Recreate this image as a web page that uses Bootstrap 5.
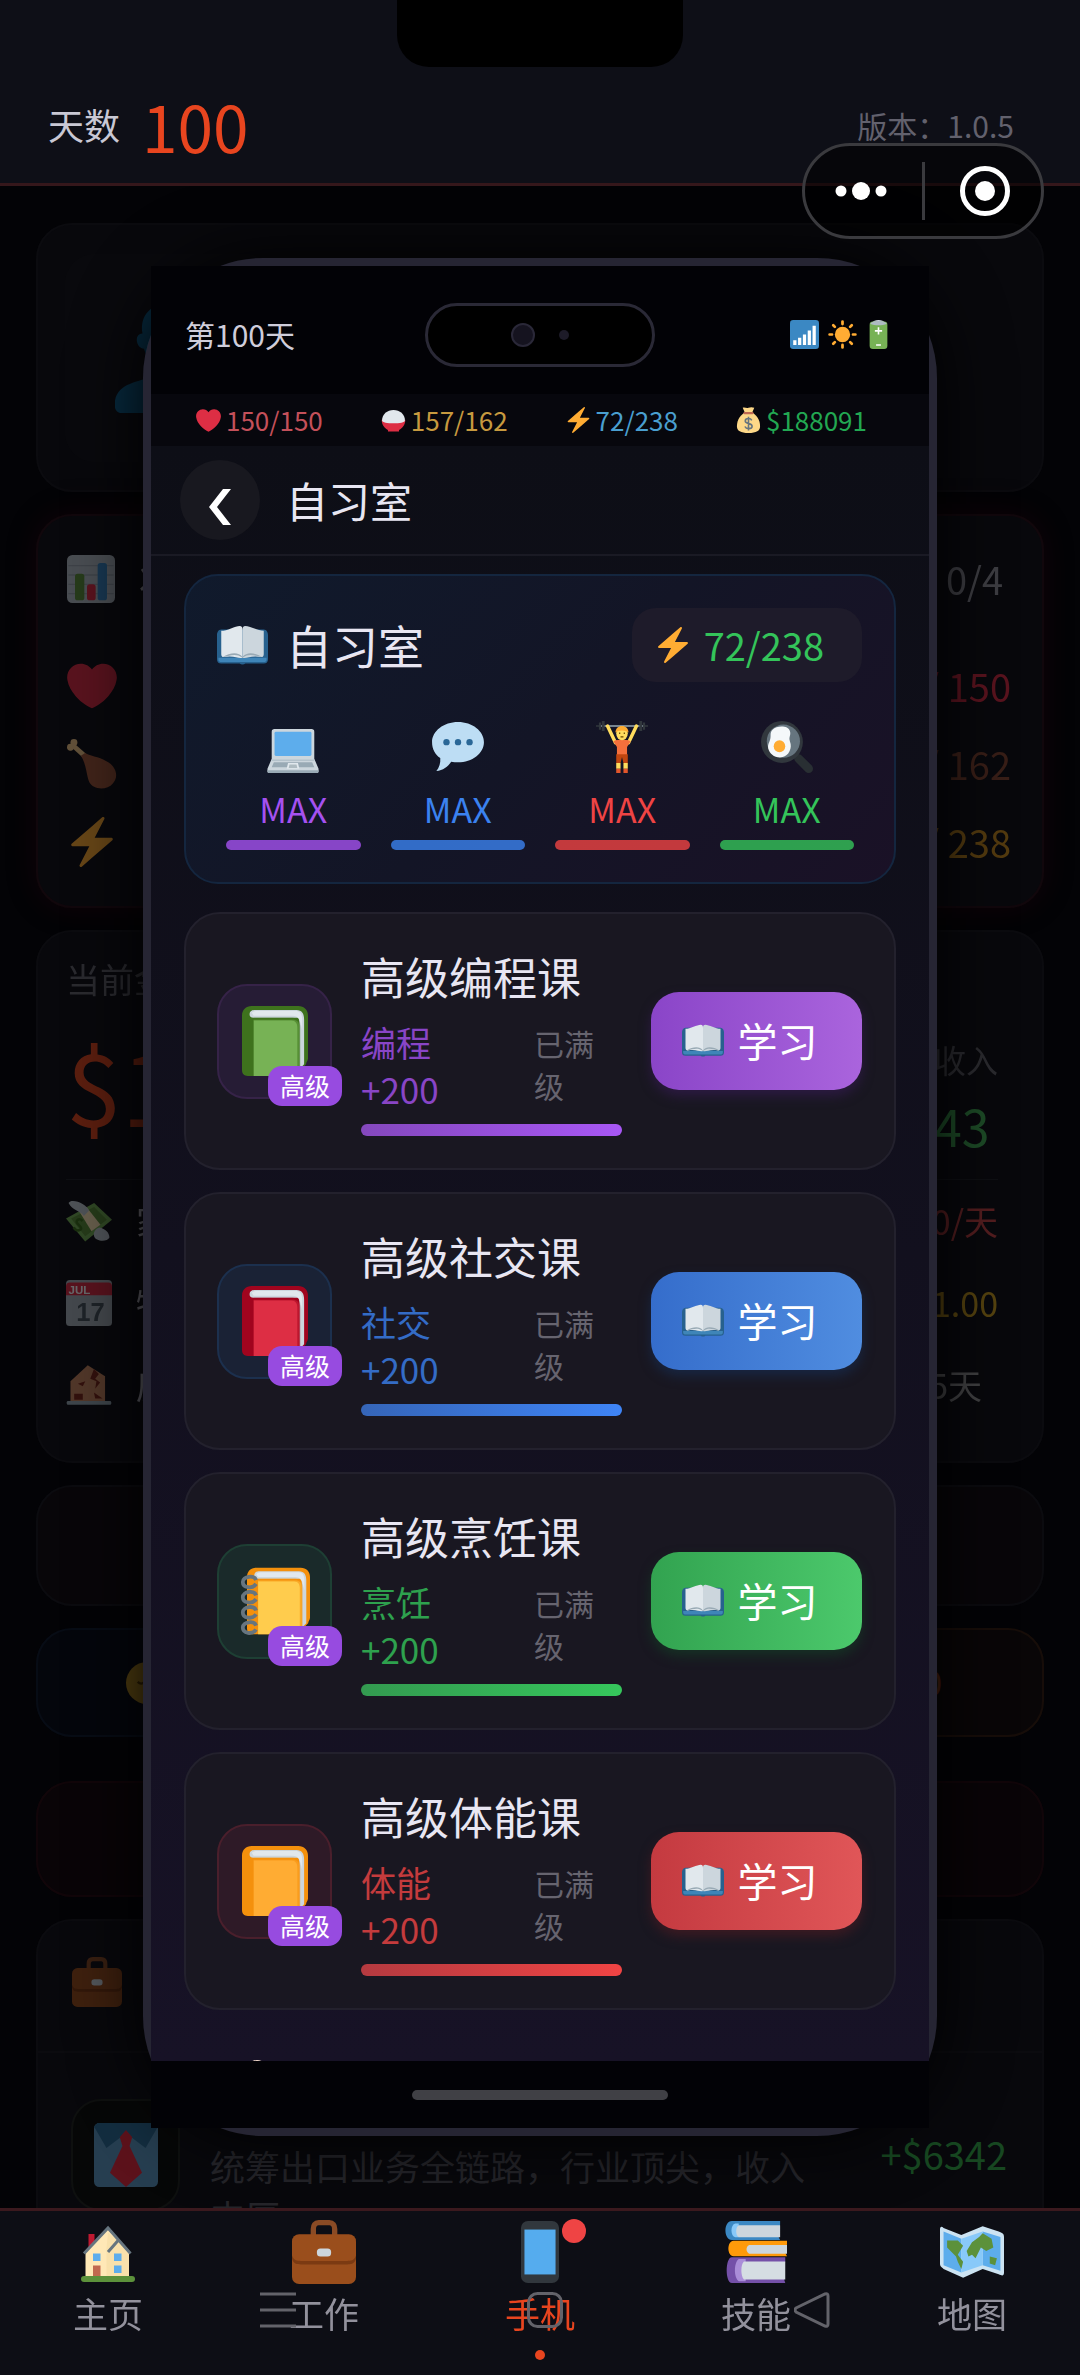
<!DOCTYPE html>
<html lang="zh-CN">
<head>
<meta charset="utf-8">
<meta name="viewport" content="width=device-width, initial-scale=1">
<title>自习室</title>
<link href="https://cdn.jsdelivr.net/npm/bootstrap@5.3.0/dist/css/bootstrap.min.css" rel="stylesheet">
<style>
  :root{--purple:#a551f0;--blue:#3b82f0;--green:#34c45a;--red:#ef4444}
  body{font-family:"Noto Sans CJK SC","Noto Sans",sans-serif;font-weight:400;background:#030306;color:#e8e6f2;height:100vh;min-height:2375px;overflow-x:hidden;line-height:1.2}
  svg{display:block;flex:none}
  .t26{font-size:26px}.t30{font-size:30px}.t34{font-size:34px}.t38{font-size:38px}.t42{font-size:42px}
  .topbar{background:#0e0f17;border-bottom:3px solid #35171b;height:186px;padding:66px 66px 0 48px}
  .day-label{color:#c9c8d4;font-size:36px}
  .day-num{color:#e8451f;font-size:64px;line-height:1}
  .version{color:#62616d}
  .notch{top:0;left:50%;width:286px;height:67px;margin-left:-143px;background:#000;border-radius:0 0 32px 32px}
  .capsule{top:143px;right:36px;width:242px;height:96px;border:3px solid #3a3a3e;border-radius:48px;background:rgba(0,0,0,.55);z-index:5;padding:0 30px}
  .capsule button{background:none;border:0;padding:0}
  .capsule i{width:3px;height:58px;background:#3a3a3e}

  /* dimmed home page behind the phone */
  .home{padding:37px 36px 0;opacity:.4}
  .panel{background:#121217;border:2px solid #19191e;border-radius:36px}
  .avatar{width:210px;height:208px;background:#16161a;border-radius:30px;margin:29px 0 0 27px}
  .stats-box{border-color:#2a0f17;box-shadow:0 0 30px #26050c}
  .line78{height:78px;padding:0 7px 0 5px}.line82{height:82px}
  .muted{color:#67676e}
  .cash{font-size:100px;line-height:160px;color:#e04a20}
  .job-icon{width:109px;height:112px;border:2px solid #22261f;border-radius:30px;background:#0e100c}
  .job-text{font-size:35px;line-height:50px;color:#5a5a62}

  /* phone */
  .phone-layer{inset:0;padding:72px 143px}
  .phone{height:100%;border:8px solid #262533;border-radius:120px;box-shadow:0 0 70px #000}
  .screen{background:linear-gradient(#0d0e16,#171226)}
  .statusbar{height:128px;background:#020206;padding:8px 38px 0 34px}
  .island{width:230px;height:64px;border:3px solid #2a2936;border-radius:32px;background:#000;left:274px;top:37px}
  .cam{width:24px;height:24px;border-radius:50%;background:#15131f;border:2px solid #2a2838}
  .cam-sm{width:10px;height:10px;border-radius:50%;background:#1d1b28}
  .vitals{height:52px;background:#07070d;padding:0 62px 0 44px}
  .titlebar{height:110px;border-bottom:2px solid #1a1a24;padding:0 29px}
  .back{width:80px;height:80px;border-radius:50%;background:#18181f;border:0}
  .content-area{padding:18px 33px 0}
  .hero{border:2px solid #14263f;border-radius:34px;background:linear-gradient(135deg,#101a2c,#131526 50%,#1a1126);padding:32px 32px 32px 31px;height:310px}
  .pill{background:#1e1b2a;border-radius:24px;height:74px;padding:0 38px 0 22px}
  .hero-skills{gap:30px;padding:0 8px 0 9px}
  .hero-skills div{min-width:0}
  .meter{height:10px;border-radius:5px;opacity:.8}
  .course{height:258px;border:2px solid #23212d;border-radius:36px;background:#191721;padding:0 32px 0 31px;gap:29px}
  .course-icon{width:115px;height:115px;border-radius:30px;border:2px solid}
  .lvl{right:-12px;bottom:-9px;width:74px;height:40px;border-radius:14px;background:#974be0;font-size:25px;line-height:38px;color:#fff}
  .course h3{font-size:44px;line-height:60px;font-weight:400;margin:0 0 12px}
  .gain{width:120px;font-size:35px;line-height:47px;opacity:.8}
  .full{width:88px;font-size:30px;line-height:42px;color:#66646f;padding-top:4px}
  .bar{height:12px;border-radius:6px;margin-top:12px}
  .study{width:211px;height:98px;border-radius:28px;border:0;color:#fff;font-size:40px;gap:14px;padding:0 14px 2px 0}
  .homebar{height:67px;background:#020206}
  .homebar span{width:256px;height:10px;border-radius:5px;background:#404045}

  .c-p{color:var(--purple)}.c-b{color:var(--blue)}.c-r{color:var(--red)}.c-g{color:var(--green)}
  .b-p{background:var(--purple)}.b-b{background:var(--blue)}.b-r{background:var(--red)}.b-g{background:var(--green)}
  .g-p{background:linear-gradient(90deg,#8448bd,#a857f5)}.g-b{background:linear-gradient(90deg,#3565b8,#3f85f7)}
  .g-g{background:linear-gradient(90deg,#339a50,#36c75c)}.g-r{background:linear-gradient(90deg,#b53a40,#f04444)}
  .s-p{background:linear-gradient(90deg,#8a45c8,#aa64dd);box-shadow:0 6px 12px #2c1a42}.s-b{background:linear-gradient(90deg,#356dcb,#508de0);box-shadow:0 6px 12px #182642}
  .s-g{background:linear-gradient(90deg,#32a350,#4cc96c);box-shadow:0 6px 12px #163024}.s-r{background:linear-gradient(90deg,#c43a40,#e05658);box-shadow:0 6px 12px #3c1a22}
  .i-p{background:#261c35;border-color:#362348!important}.i-b{background:#1a2235;border-color:#1c304e!important}
  .i-g{background:#1a2a2a;border-color:#1e3f34!important}.i-r{background:#2e1a27;border-color:#4a1f2c!important}

  .tabs{height:167px;border-top:3px solid #3b191e;background:#0d0e15;z-index:3}
  .tabs a{flex:1 1 0;color:#92919c;text-decoration:none;padding-top:9px}
  .tabs a span{font-size:35px;line-height:48px;margin-top:5px}
  .tabs a.on{color:#e8451f}
  .tabs a.on::after{content:"";width:10px;height:10px;border-radius:50%;background:#e8451f;margin-top:13px}
  .dot{width:24px;height:24px;border-radius:50%;background:#ef4444;top:8px;left:50%;margin-left:22px}
  .sys{left:10px;right:0;top:81px;gap:231px;pointer-events:none}
</style>
<script src="https://cdn.jsdelivr.net/npm/bootstrap@5.3.0/dist/js/bootstrap.bundle.min.js"></script>
</head>
<body class="d-flex flex-column position-relative">

<svg width="0" height="0" class="position-absolute" aria-hidden="true">
  <symbol id="heart" viewBox="0 0 36 36"><path fill="#DD2E44" d="M35.885 11.833c0-5.45-4.418-9.868-9.867-9.868-3.308 0-6.227 1.633-8.018 4.129-1.791-2.496-4.71-4.129-8.017-4.129-5.45 0-9.868 4.417-9.868 9.868 0 .772.098 1.52.266 2.241C1.751 22.587 11.216 31.568 18 34.034c6.783-2.466 16.249-11.447 17.617-19.959.17-.721.268-1.469.268-2.242z"/></symbol>
  <symbol id="bolt" viewBox="0 0 36 36"><path fill="#FFAC33" d="M32.938 15.651C32.792 15.26 32.418 15 32 15H19.925L26.89 1.458c.219-.426.106-.947-.271-1.243C26.437.071 26.218 0 26 0c-.233 0-.466.082-.653.243L18 6.588 3.347 19.243c-.316.273-.43.714-.284 1.105S3.582 21 4 21h12.075L9.11 34.542c-.219.426-.106.947.271 1.243.182.144.401.215.619.215.233 0 .466-.082.653-.243L18 29.412l14.653-12.655c.317-.273.43-.714.285-1.106z"/></symbol>
  <symbol id="rice" viewBox="0 0 36 36"><path fill="#DD2E44" d="M1 17h34c0 7-4 12.500-9 14.500V34H10v-2.500C5 29.500 1 24 1 17z"/><path fill="#E1E8ED" d="M1.500 18C1.500 9 9 3 18 3s16.500 6 16.500 15c0 3-8 4-16.500 4S1.500 21 1.500 18z"/></symbol>
  <symbol id="bag" viewBox="0 0 36 36"><path fill="#FDD888" d="M12 8C4 14 2 21 2 27c0 6 5 9 16 9s16-3 16-9c0-6-2-13-10-19z"/><path fill="#FDD888" d="M10 1c3-1 5 1 8 0s5-1 8 0l-3 7H13z"/><rect x="11" y="7" width="14" height="3" rx="1.500" fill="#BF6952"/><path d="M22.500 18.500c-1-2-2.500-2.500-4.500-2.500-2.500 0-4.500 1-4.500 3.500 0 5 9.500 2 9.500 7 0 2.500-2.500 3.500-5 3.500s-4-1-5-3M18 13.500v19" fill="none" stroke="#67757F" stroke-width="2.200"/></symbol>
  <symbol id="signal" viewBox="0 0 36 36"><rect width="36" height="36" rx="4" fill="#3B88C3"/><path fill="#fff" d="M4 25h4v6H4zM10 22h4v9h-4zM16 18h4v13h-4zM22 13h4v18h-4zM28 7h4v24h-4z"/></symbol>
  <symbol id="sun" viewBox="0 0 36 36"><circle cx="18" cy="18" r="9.500" fill="#FFAC33"/><path stroke="#FFAC33" stroke-width="3.400" stroke-linecap="round" d="M18 2v3M18 31v3M2 18h3M31 18h3M6.500 6.500l2 2M27.500 27.500l2 2M6.500 29.500l2-2M27.500 8.500l2-2"/></symbol>
  <symbol id="battery" viewBox="0 0 24 36"><ellipse cx="12" cy="3" rx="7" ry="3" fill="#CCD6DD"/><rect x="1" y="2" width="22" height="34" rx="4" fill="#77B255"/><path d="M2 5c0-5 20-5 20 0-5 2-15 2-20 0z" fill="#AEBBC1"/><path stroke="#fff" stroke-width="2" d="M12 9v9M7.500 13.500h9M9 31h6"/></symbol>
  <symbol id="openbook" viewBox="0 0 36 28"><path fill="#27618E" d="M0 7c0-2 1-4 3-4h30c2 0 3 2 3 4v17c0 2-1 3-3 3H20c-1 1-3 1-4 0H3c-2 0-3-1-3-3z"/><path fill="#3F85B8" d="M1 23h34v1.500c0 1-1 1.500-2 1.500H3c-1 0-2-.5-2-1.500z"/><path fill="#E1E8ED" d="M3 4C7 4 13 .5 16 .5c1.500 0 2 1 2 2.500v20c-3 1-6-2-13-.500-1 .2-2-.5-2-2z"/><path fill="#CCD6DD" d="M33 4C29 4 23 .5 20 .5c-1.500 0-2 1-2 2.500v20c3 1 6-2 13-.500 1 .2 2-.5 2-2z"/><path fill="#99AAB5" d="M4 22.500c6-1 9-3 14 0.500 5-3.500 8-1.500 14-.500-5-3-11-4-14 0-3-4-9-3-14 0z"/></symbol>
  <symbol id="laptop" viewBox="0 0 36 31"><path fill="#CCD6DD" d="M5 0h26a2 2 0 0 1 2 2v19l3 7v2a1 1 0 0 1-1 1H1a1 1 0 0 1-1-1v-2l3-7V2a2 2 0 0 1 2-2z"/><rect x="5" y="2" width="26" height="17" rx="1" fill="#5DADEC"/><path fill="#B4C2CB" d="M3 21.500h30v1H3z"/><path fill="#99AAB5" d="M4.500 23.500h27l1.500 3.500H3zM0 29h36v1a1 1 0 0 1-1 1H1a1 1 0 0 1-1-1z"/><path fill="#E1E8ED" d="M14.500 24h7l1 4h-9z"/><path fill="#AEBBC1" d="M15.500 25h5l.5 2.500h-6z"/></symbol>
  <symbol id="bubble" viewBox="0 0 36 34"><path fill="#BDDDF4" d="M18 0c9.900 0 18 6.300 18 14s-8.100 14-18 14c-1.600 0-3.200-.2-4.700-.5C11 31 7.500 33.500 3 34c2-2.500 3-5.500 2.700-9C2 22.500 0 18.500 0 14 0 6.300 8.100 0 18 0z"/><circle cx="10" cy="14" r="2.200" fill="#2A6797"/><circle cx="18" cy="14" r="2.200" fill="#2A6797"/><circle cx="26" cy="14" r="2.200" fill="#2A6797"/></symbol>
  <symbol id="lifter" viewBox="0 0 36 36"><path stroke="#99AAB5" d="M3 3.500h30"/><path fill="#31373D" d="M4 0h2v7H4zM2 1h1.500v5H2zM0 3h2v1H0zM30 0h2v7h-2zM32.500 1H34v5h-1.500zM34 3h2v1h-2z"/><path d="M8 3.500l5.500 11.500M28 3.500L22.500 15" stroke="#FFDC5D" stroke-width="2.400" stroke-linecap="round"/><path fill="#F4703C" d="M12 14c2-1 4-1 6-1s4 0 6 1l-2.500 4v6h-7v-6z"/><path fill="#C1460F" d="M14 23h8v6h-3l-1-4-1 4h-3z"/><path fill="#FFDC5D" d="M14 29h3v4h-3zM19 29h3v4h-3z"/><path fill="#E2562B" d="M14 33h3v3h-3zM19 33h3v3h-3z"/><ellipse cx="18" cy="8.500" rx="4" ry="4.800" fill="#FFDC5D"/><path fill="#FFAC33" d="M13.500 8c0-6 9-6 9 0-2-2-7-2-9 0z"/><path stroke="#664500" d="M16 8.500h.8M19.200 8.500h.8M17 11h2"/></symbol>
  <symbol id="pan" viewBox="0 0 36 36"><path stroke="#292F33" stroke-width="6" stroke-linecap="round" d="M26 26l7 7"/><circle cx="14.500" cy="14.500" r="14.500" fill="#31373D"/><circle cx="15.500" cy="14" r="11.500" fill="#66757F"/><path fill="#F5F8FA" d="M8 6c3-3 11-3 12 1 1 3-1 4 0 7 2 5-1 10-5 11-5 1-9-2-10-6-.500-3 1-4 1.500-7C7 10 6 8 8 6z"/><ellipse cx="12.800" cy="17.500" rx="4" ry="4.200" fill="#FFAC33"/></symbol>
  <symbol id="book" viewBox="0 0 34 36"><path d="M0 5C0 2 2 0 5 0h24c3 0 5 2 5 5v22c0 1-1 2-1 3l-3 3c-1 2-2 3-4 3H3c-2 0-3-1-3-3z" fill="var(--dk)"/><path fill="#CCD6DD" d="M4 3.500C4.500 2 6 2 7 2h21c3 0 4 2 4 5v23l-2.500 2.500V6H6C4 6 3.700 5 4 3.500z"/><path fill="#E1E8ED" d="M5 3.500C6 2.500 7 2.500 8 2.500h20c2 0 3 2 3 4v6C30 7 29 5 26 5H6z"/><path fill="var(--lt)" d="M6 7h20c2.500 0 3.500 1 3.500 4v22c0 2-1 3-3 3H6z"/><path fill="var(--dk)" opacity=".55" d="M6 6h20c3 0 4 2 4 5v22l-1.500 2V11c0-2-1-3.500-3-3.500H6z"/></symbol>
  <symbol id="rings" viewBox="0 0 10 36"><g fill="none" stroke="#67757F" stroke-width="2"><path d="M9 7c-1-3-7-2-7 1s5 4 7 1M9 15c-1-3-7-2-7 1s5 4 7 1M9 23c-1-3-7-2-7 1s5 4 7 1M9 31c-1-3-7-2-7 1s5 4 7 1"/></g></symbol>
  <symbol id="case" viewBox="0 0 36 36"><path fill="none" stroke="#8A4B25" stroke-width="3" d="M12 10V5c0-2 1-3.500 3-3.500h6c2 0 3 1.500 3 3.500v5"/><rect y="8" width="36" height="28" rx="4" fill="#9A4E1C"/><path fill="#7B3A12" d="M0 20c1 3 3 3 5 3h26c2 0 4 0 5-3v2c-1 3-3 3-5 3H5c-2 0-4 0-5-3z"/><rect x="14" y="16" width="8" height="4.500" rx="2" fill="#CCD6DD"/></symbol>
  <symbol id="chart" viewBox="0 0 36 36"><rect width="36" height="36" rx="4" fill="#B4BEC5"/><path stroke="#98A4AC" d="M1 8h34M1 15h34M1 22h34M1 29h34"/><rect x="6" y="14" width="7" height="20" rx="2" fill="#5C913B"/><rect x="15" y="22" width="6.500" height="12" rx="2" fill="#DD2E44"/><rect x="23" y="6" width="7" height="28" rx="2" fill="#3B88C3"/></symbol>
  <symbol id="leg" viewBox="0 0 36 36"><circle cx="5" cy="2.500" r="2.500" fill="#F1C688"/><circle cx="2.500" cy="6" r="2.500" fill="#F1C688"/><path stroke="#F1C688" stroke-width="3.500" d="M3.500 4l9 8"/><path fill="#A0583A" d="M10 12l3-2c6 3 12 3 17 7 6 4 7 11 3 15-4 5-14 5-17-1-2-5-2-13-6-19z"/></symbol>
  <symbol id="person" viewBox="0 0 36 36"><path fill="#106A9A" d="M36 32v2c0 1-1 2-2 2H2c-1 0-2-1-2-2v-2c1-6 8-6 12-8 2-1 2-3 0-5-1-1-2-2-2.500-4C7 15 6 10 9 10 8 4 12 0 18 0s10 4 9 10c3 0 2 5-.500 5-.500 2-1.500 3-2.500 4-2 2-2 4 0 5 4 2 11 2 12 8z"/></symbol>
  <symbol id="money" viewBox="0 0 36 34"><path fill="#77B255" d="M0 15L22 3l14 13-21 17z"/><path fill="#5C913B" d="M4 15L22 6l10 10-17 13z"/><path fill="#FFE8B6" d="M10 9l6-3 11 14-7 5z"/><path d="M13 17c-3-3-6 0-4 2s4 4 2 5-4 0-5-2" fill="none" stroke="#3E721D" stroke-width="2"/><path fill="#C1CBD2" d="M2 3c2-4 14 0 16 6l-4 4C11 9 5 9 2 3zM34 30c-2 4-11 3-12-1-1-3 1-6 4-7 5 1 8 4 8 8z"/></symbol>
  <symbol id="house" viewBox="0 0 36 38"><path fill="#BE1931" d="M5 6h4v10H5z"/><path fill="#FFE8B6" d="M3 17L18 3l14 14v17H3z"/><path fill="#F4D9A0" d="M17 16l1-11 14 12v17H17z" opacity=".5"/><path fill="none" stroke="#66757F" stroke-width="2" d="M2 19L18 2l15 17M18 18l7-8"/><path fill="#5DADEC" d="M8 19h5v5H8zM22 19h5v5h-5zM22 27h5v5h-5z"/><path fill="#C1694F" d="M8 27h5v8H8z"/><rect y="34" width="36" height="4" rx="2" fill="#5C913B"/></symbol>
  <symbol id="mobile" viewBox="0 0 22 36"><rect width="22" height="36" rx="4" fill="#31373D"/><rect x="2" y="5" width="18" height="26" fill="#55ACEE"/></symbol>
  <symbol id="books" viewBox="0 0 36 36"><path fill="#3B88C3" d="M4 0h28v2l-1 7 1 2H4C-1 11-1 0 4 0z"/><path fill="#88C9F9" d="M6 1.500C3 2 3 9 6 9.500h2v-8z"/><path fill="#CCD6DD" d="M8 2.500h24v7H8c-2-1-2-6 0-7z"/><path fill="#FF9A0A" d="M5 11.500h31v2l-1 5 1 2H5c-4 0-4-9 0-9z"/><path fill="#CCD6DD" d="M14 14h22v5H14c-2-1-2-4 0-5z"/><path fill="#7450A8" d="M4 21h31v2l-1 10 1 3H4c-4 0-4-15 0-15z"/><path fill="#AA8DD8" d="M8 22h4v13H8c-3-2-3-11 0-13z"/><path fill="#D5DDE3" d="M11 23.500h24v10.500H11c-2-2-2-9 0-10.500z"/></symbol>
  <symbol id="map" viewBox="0 0 36 29"><path fill="#CCE3F2" d="M0 2c0-2 1-2 2-1l10 4 12-5 9 3c2 1 3 1 3 3v20c0 2-1 2-3 1l-9-3-11 5-11-5c-1-1-2-1-2-3z"/><path fill="#5DADEC" d="M2 3l10 4v19L2 22zM24 3l10 3v19l-10-3z"/><path fill="#88C9F9" d="M12 7l12-4v19l-12 4z"/><path fill="#5C913B" d="M4 8l6 0 3 3-3 5 3 4-1 4-2-4-1-3-5-5zM18 9l4-3 2-2 5 3 1 5-4 2-3-2-3 6-2-2-2 1-1-3zM28 17l4 1-1 4-3-1z"/></symbol>
  <symbol id="shirt" viewBox="0 0 36 36"><rect width="36" height="36" rx="3" fill="#5C98C0"/><path fill="#2F6F96" d="M0 2l2-2h32l2 2-7 12-8-6h-6l-8 6z"/><path fill="#E32B3E" d="M14.500 8L18 4l3.500 4-1.500 5 7 15-9 8-9-8 7-15z"/></symbol>
  <symbol id="oldhouse" viewBox="0 0 36 34"><path fill="#C98760" d="M3 14L17 1l14 9v21H3z"/><path fill="#7B2A1B" d="M22 4l4 4-3 4 4 3-4 5 1-6-5-2zM6 24h7v5H6zM22 23l7 5h-6zM9 16l6-2-2 4z"/><rect y="30" width="36" height="3" rx="1" fill="#99AAB5"/></symbol>
  <symbol id="face" viewBox="0 0 36 36"><circle cx="18" cy="18" r="18" fill="#D0A024"/><path stroke="#664500" stroke-width="2" fill="none" d="M10 17c2 2 4 2 6 0M21 17c2 2 4 2 6 0"/><ellipse cx="18" cy="26" rx="3" ry="4" fill="#664500"/></symbol>
</svg>

<header class="topbar d-flex align-items-center justify-content-between flex-shrink-0">
  <div class="d-flex align-items-center" style="gap:22px"><span class="day-label">天数</span><span class="day-num">100</span></div>
  <span class="version t30">版本：1.0.5</span>
</header>
<div class="notch position-absolute"></div>
<div class="capsule position-absolute d-flex align-items-center justify-content-between">
  <button type="button" aria-label="更多"><svg width="52" height="20" viewBox="0 0 52 20" fill="#fff"><circle cx="6" cy="10" r="5.500"/><circle cx="26" cy="10" r="9"/><circle cx="46" cy="10" r="5.500"/></svg></button>
  <i></i>
  <button type="button" aria-label="关闭"><svg width="52" height="52" viewBox="0 0 52 52"><circle cx="26" cy="26" r="22.500" fill="none" stroke="#fff" stroke-width="5"/><circle cx="26" cy="26" r="10" fill="#fff"/></svg></button>
</div>

<main class="flex-fill position-relative overflow-hidden" style="min-height:0">
  <div class="home position-absolute top-0 start-0 w-100 d-flex flex-column" aria-hidden="true" style="gap:22px">
    <section class="panel" style="height:269px"><div class="avatar d-flex align-items-center justify-content-center"><svg width="114" height="110" preserveAspectRatio="none"><use href="#person"/></svg></div></section>
    <section class="panel stats-box d-flex flex-column px-4 t38" style="height:394px;padding-top:24px">
      <div class="line78 d-flex align-items-center" style="margin-bottom:29px"><svg width="48" height="48"><use href="#chart"/></svg><span class="ms-4">状态</span><span class="ms-auto me-2" style="color:#96969f">0/4</span></div>
      <div class="line78 d-flex align-items-center justify-content-between"><svg width="50" height="50"><use href="#heart"/></svg><span style="color:#dd2e44">150 / 150</span></div>
      <div class="line78 d-flex align-items-center justify-content-between"><svg width="50" height="50"><use href="#leg"/></svg><span style="color:#8b4a32">157 / 162</span></div>
      <div class="line78 d-flex align-items-center justify-content-between"><svg width="50" height="50"><use href="#bolt"/></svg><span style="color:#cc9020">72 / 238</span></div>
    </section>
    <section class="panel t34" style="height:533px;padding:22px 44px 0 28px">
      <div class="d-flex justify-content-between border-bottom border-dark" style="height:226px">
        <div><div class="muted" style="line-height:50px">当前金额</div><div class="cash">$188091</div></div>
        <div class="text-center" style="padding-top:80px"><div class="muted" style="font-size:32px;line-height:50px">每日收入</div><div style="font-size:50px;line-height:82px;color:#46b95a">+$43</div></div>
      </div>
      <div class="line82 d-flex align-items-center"><svg width="46" height="44"><use href="#money"/></svg><span class="ms-4">家庭支出</span><span class="ms-auto" style="color:#d04848">-$120/天</span></div>
      <div class="line82 d-flex align-items-center"><svg width="46" height="46" viewBox="0 0 36 36"><rect width="36" height="36" rx="3" fill="#A8B2B8"/><path d="M0 12V5c0-2 1-3 3-3h30c2 0 3 1 3 3v7z" fill="#DD2E44"/><text x="2" y="11" font-size="9" font-weight="700" fill="#fff" font-family="Liberation Sans">JUL</text><text x="8" y="32" font-size="20" fill="#4A565E" font-weight="700" font-family="Liberation Sans">17</text></svg><span class="ms-4">物价指数</span><span class="ms-auto" style="color:#d4a520">1.00</span></div>
      <div class="line82 d-flex align-items-center"><svg width="46" height="42"><use href="#oldhouse"/></svg><span class="ms-4">房租剩余</span><span class="ms-auto me-3" style="color:#a0a0a0">5天</span></div>
    </section>
    <section class="panel" style="height:121px;background:#130d0f"></section>
    <div class="d-flex" style="gap:22px;height:109px">
      <section class="panel flex-fill d-flex align-items-center" style="background:#090d17;border-color:#101c2e;padding-left:88px"><svg width="42" height="42"><use href="#face"/></svg></section>
      <section class="panel flex-fill d-flex align-items-center justify-content-end t34" style="background:#150e0c;border-color:#38200f;padding-right:100px;color:#b05020">$100</section>
    </div>
    <section class="panel" style="height:116px;background:#14080c;border-color:#2a0c10;margin-top:22px"></section>
    <section class="panel" style="height:420px">
      <div class="d-flex align-items-center" style="height:132px;padding:0 34px 8px;border-bottom:2px solid #19191e"><svg width="50" height="50"><use href="#case"/></svg></div>
      <div class="d-flex align-items-start" style="padding:46px 35px 0 33px">
        <div class="job-icon d-flex align-items-center justify-content-center flex-shrink-0"><svg width="64" height="64"><use href="#shirt"/></svg></div>
        <div class="job-text flex-fill" style="padding:42px 44px 0 30px">统筹出口业务全链路，行业顶尖，收入丰厚</div>
        <div class="t38" style="color:#37af4b;padding-top:32px">+$6342</div>
      </div>
    </section>
  </div>

  <div class="phone-layer position-absolute">
    <div class="phone d-flex flex-column">
      <div class="statusbar d-flex align-items-center justify-content-between position-relative flex-shrink-0">
        <span class="t30" style="color:#cfcdda">第100天</span>
        <div class="island position-absolute d-flex align-items-center justify-content-center"><span class="cam me-4"></span><span class="cam-sm"></span></div>
        <div class="d-flex" style="gap:9px"><svg width="29" height="29"><use href="#signal"/></svg><svg width="29" height="29"><use href="#sun"/></svg><svg width="25" height="29"><use href="#battery"/></svg></div>
      </div>
      <div class="vitals d-flex align-items-center justify-content-between flex-shrink-0 t26">
        <span class="d-flex align-items-center gap-1" style="color:#c4505a"><svg width="27" height="25"><use href="#heart"/></svg>150/150</span>
        <span class="d-flex align-items-center gap-1" style="color:#c79a3f"><svg width="27" height="25"><use href="#rice"/></svg>157/162</span>
        <span class="d-flex align-items-center gap-1" style="color:#4a9fd0"><svg width="27" height="26"><use href="#bolt"/></svg>72/238</span>
        <span class="d-flex align-items-center gap-1" style="color:#22a852"><svg width="27" height="26"><use href="#bag"/></svg>$188091</span>
      </div>
      <div class="screen d-flex flex-column flex-fill overflow-hidden">
        <div class="titlebar d-flex align-items-center flex-shrink-0">
          <button class="back d-flex align-items-center justify-content-center" style="padding-top:14px" type="button" aria-label="返回"><svg width="24" height="36" viewBox="0 0 24 36"><path fill="#fff" d="M15 0h8L9 18l14 18h-8L1 18z"/></svg></button>
          <h1 class="t42 m-0 fw-normal" style="padding-left:26px">自习室</h1>
        </div>
        <div class="content-area d-flex flex-column" style="gap:22px">
          <section class="hero flex-shrink-0" style="margin-bottom:6px">
            <div class="d-flex align-items-center justify-content-between">
              <h2 class="d-flex align-items-center m-0 fw-normal" style="font-size:46px;gap:18px"><svg width="51" height="40"><use href="#openbook"/></svg>自习室</h2>
              <span class="pill d-flex align-items-center t38 c-g" style="gap:12px"><svg width="38" height="36"><use href="#bolt"/></svg>72/238</span>
            </div>
            <div class="hero-skills d-flex text-center t34" style="margin-top:34px;line-height:46px">
              <div class="flex-fill c-p"><svg class="mx-auto" width="52" height="62" viewBox="0 0 52 62"><use href="#laptop" y="13" width="52" height="44"/></svg><div class="my-2">MAX</div><div class="meter b-p"></div></div>
              <div class="flex-fill c-b"><svg class="mx-auto" width="52" height="62" viewBox="0 0 52 62"><use href="#bubble" y="6" width="52" height="49"/></svg><div class="my-2">MAX</div><div class="meter b-b"></div></div>
              <div class="flex-fill c-r"><svg class="mx-auto" width="52" height="62" viewBox="0 0 52 62"><use href="#lifter" y="5" width="52" height="52"/></svg><div class="my-2">MAX</div><div class="meter b-r"></div></div>
              <div class="flex-fill c-g"><svg class="mx-auto" width="52" height="62" viewBox="0 0 52 62"><use href="#pan" y="5" width="52" height="52"/></svg><div class="my-2">MAX</div><div class="meter b-g"></div></div>
            </div>
          </section>

          <article class="course d-flex align-items-center flex-shrink-0">
            <div class="course-icon i-p position-relative d-flex align-items-center justify-content-center flex-shrink-0" style="--dk:#3E721D;--lt:#77B255"><svg width="66" height="70"><use href="#book"/></svg><span class="lvl position-absolute text-center">高级</span></div>
            <div class="flex-fill"><h3>高级编程课</h3><div class="d-flex justify-content-between"><div class="gain c-p">编程 +200</div><div class="full">已满级</div></div><div class="bar g-p"></div></div>
            <button class="study s-p d-flex align-items-center justify-content-center flex-shrink-0" type="button"><svg width="42" height="33"><use href="#openbook"/></svg>学习</button>
          </article>
          <article class="course d-flex align-items-center flex-shrink-0">
            <div class="course-icon i-b position-relative d-flex align-items-center justify-content-center flex-shrink-0" style="--dk:#A0041E;--lt:#DD2E44"><svg width="66" height="70"><use href="#book"/></svg><span class="lvl position-absolute text-center">高级</span></div>
            <div class="flex-fill"><h3>高级社交课</h3><div class="d-flex justify-content-between"><div class="gain c-b">社交 +200</div><div class="full">已满级</div></div><div class="bar g-b"></div></div>
            <button class="study s-b d-flex align-items-center justify-content-center flex-shrink-0" type="button"><svg width="42" height="33"><use href="#openbook"/></svg>学习</button>
          </article>
          <article class="course d-flex align-items-center flex-shrink-0">
            <div class="course-icon i-g position-relative d-flex align-items-center justify-content-center flex-shrink-0" style="--dk:#F4900C;--lt:#FFCC4D"><svg width="70" height="70" viewBox="0 0 70 70"><use href="#book" x="7" width="63" height="70"/><use href="#rings" x="-1" width="19" height="70"/></svg><span class="lvl position-absolute text-center">高级</span></div>
            <div class="flex-fill"><h3>高级烹饪课</h3><div class="d-flex justify-content-between"><div class="gain c-g">烹饪 +200</div><div class="full">已满级</div></div><div class="bar g-g"></div></div>
            <button class="study s-g d-flex align-items-center justify-content-center flex-shrink-0" type="button"><svg width="42" height="33"><use href="#openbook"/></svg>学习</button>
          </article>
          <article class="course d-flex align-items-center flex-shrink-0">
            <div class="course-icon i-r position-relative d-flex align-items-center justify-content-center flex-shrink-0" style="--dk:#F4900C;--lt:#FFAC33"><svg width="66" height="70"><use href="#book"/></svg><span class="lvl position-absolute text-center">高级</span></div>
            <div class="flex-fill"><h3>高级体能课</h3><div class="d-flex justify-content-between"><div class="gain c-r">体能 +200</div><div class="full">已满级</div></div><div class="bar g-r"></div></div>
            <button class="study s-r d-flex align-items-center justify-content-center flex-shrink-0" type="button"><svg width="42" height="33"><use href="#openbook"/></svg>学习</button>
          </article>
          <svg width="24" height="32" viewBox="0 0 24 32" style="margin:28px 0 0 61px"><ellipse cx="12" cy="12" rx="11" ry="12" fill="#F7DECE"/></svg>
        </div>
      </div>
      <div class="homebar d-flex align-items-center justify-content-center flex-shrink-0"><span></span></div>
    </div>
  </div>
</main>

<nav class="tabs d-flex position-relative flex-shrink-0">
  <a href="#" class="d-flex flex-column align-items-center"><svg width="54" height="64" viewBox="0 0 54 64"><use href="#house" y="4" width="54" height="59"/></svg><span>主页</span></a>
  <a href="#" class="d-flex flex-column align-items-center"><svg width="64" height="64"><use href="#case"/></svg><span>工作</span></a>
  <a href="#" class="on d-flex flex-column align-items-center position-relative"><svg width="38" height="64"><use href="#mobile"/></svg><b class="dot position-absolute"></b><span>手机</span></a>
  <a href="#" class="d-flex flex-column align-items-center"><svg width="62" height="64"><use href="#books"/></svg><span>技能</span></a>
  <a href="#" class="d-flex flex-column align-items-center"><svg width="64" height="64"><use href="#map"/></svg><span>地图</span></a>
  <div class="sys position-absolute d-flex justify-content-center" aria-hidden="true">
    <svg width="36" height="36" viewBox="0 0 36 36"><path d="M0 2h36M0 18h36M0 34h36" stroke="#63636a" stroke-width="3"/></svg>
    <svg width="36" height="36" viewBox="0 0 36 36"><rect x="1.500" y="1.500" width="33" height="33" rx="9" fill="none" stroke="#63636a" stroke-width="3"/></svg>
    <svg width="36" height="36" viewBox="0 0 36 36"><path d="M2 16L31 2q3-1 3 2v28q0 3-3 2L2 20q-2-2 0-4z" fill="none" stroke="#63636a" stroke-width="3"/></svg>
  </div>
</nav>
</body>
</html>
